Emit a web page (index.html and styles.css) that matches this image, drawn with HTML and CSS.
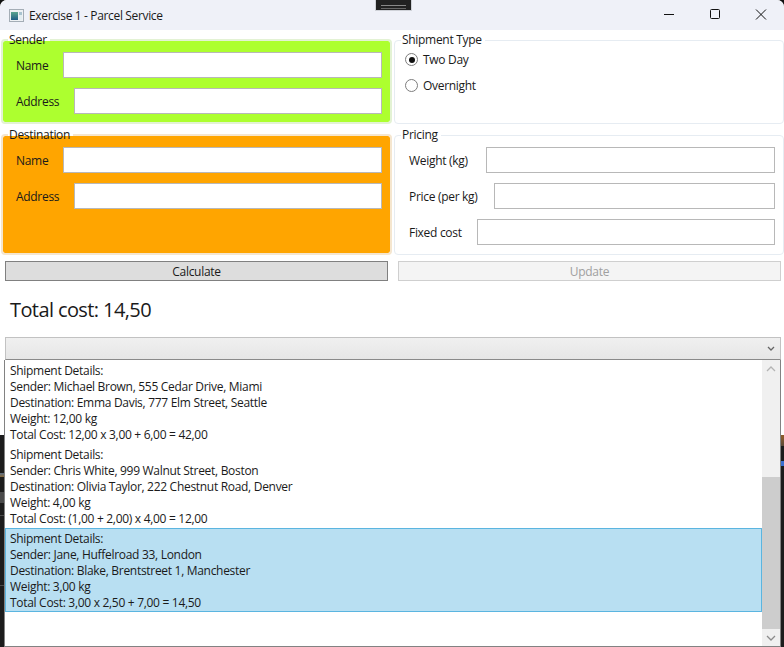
FILE: index.html
```html
<!DOCTYPE html>
<html lang="en">
<head>
<meta charset="UTF-8">
<meta name="viewport" content="width=device-width, initial-scale=1.0">
<title>Exercise 1 - Parcel Service</title>
<link rel="stylesheet" href="styles.css">
</head>
<body>
<div id="window">
  <div class="grip"><span></span></div>
  <header class="titlebar">
    <svg class="app-icon" width="15" height="13" viewBox="0 0 15 13">
      <defs>
        <linearGradient id="pane" x1="0" y1="0" x2="0" y2="1">
          <stop offset="0" stop-color="#5aa58f"/>
          <stop offset="1" stop-color="#1f5d86"/>
        </linearGradient>
      </defs>
      <rect x="0.5" y="0.5" width="14" height="12" fill="#eef1f4" stroke="#a4adb6"/>
      <rect x="2" y="3" width="7" height="8" fill="url(#pane)"/>
      <rect x="10" y="3" width="3" height="8" fill="#e3edf0"/>
      <rect x="10" y="3" width="3" height="3" fill="#a9c3cf"/>
    </svg>
    <span class="title">Exercise 1 - Parcel Service</span>
    <div class="caption">
      <svg width="46" height="30" viewBox="0 0 46 30"><path d="M18 14.5h10" stroke="#111" fill="none"/></svg>
      <svg width="46" height="30" viewBox="0 0 46 30"><rect x="18.5" y="9.5" width="9" height="9" rx="1" stroke="#111" fill="none"/></svg>
      <svg width="46" height="30" viewBox="0 0 46 30"><path d="M18 9.5l10 10M28 9.5l-10 10" stroke="#111" fill="none"/></svg>
    </div>
  </header>

  <main class="content">
    <div class="groups">
      <fieldset class="group sender">
        <legend>Sender</legend>
        <div class="body">
          <div class="field"><label>Name</label><input type="text"></div>
          <div class="field"><label>Address</label><input type="text"></div>
        </div>
      </fieldset>
      <fieldset class="group shipment">
        <legend>Shipment Type</legend>
        <div class="body">
          <div class="radio"><span class="dot checked"></span>Two Day</div>
          <div class="radio"><span class="dot"></span>Overnight</div>
        </div>
      </fieldset>
      <fieldset class="group destination">
        <legend>Destination</legend>
        <div class="body">
          <div class="field"><label>Name</label><input type="text"></div>
          <div class="field"><label>Address</label><input type="text"></div>
        </div>
      </fieldset>
      <fieldset class="group pricing">
        <legend>Pricing</legend>
        <div class="body">
          <div class="field weight"><label>Weight (kg)</label><input type="text"></div>
          <div class="field"><label>Price (per kg)</label><input type="text"></div>
          <div class="field fixed"><label>Fixed cost</label><input type="text"></div>
        </div>
      </fieldset>
    </div>

    <div class="buttons">
      <button class="btn">Calculate</button>
      <button class="btn" disabled>Update</button>
    </div>

    <div class="total">Total cost: 14,50</div>

    <div class="combo">
      <svg width="8" height="6" viewBox="0 0 8 6"><path d="M1 1l3 3 3-3" stroke="#666" stroke-width="1.3" fill="none"/></svg>
    </div>

    <div class="listbox">
      <ul class="items">
        <li>Shipment Details:<br>Sender: Michael Brown, 555 Cedar Drive, Miami<br>Destination: Emma Davis, 777 Elm Street, Seattle<br>Weight: 12,00 kg<br>Total Cost: 12,00 x 3,00 + 6,00 = 42,00</li>
        <li>Shipment Details:<br>Sender: Chris White, 999 Walnut Street, Boston<br>Destination: Olivia Taylor, 222 Chestnut Road, Denver<br>Weight: 4,00 kg<br>Total Cost: (1,00 + 2,00) x 4,00 = 12,00</li>
        <li class="selected">Shipment Details:<br>Sender: Jane, Huffelroad 33, London<br>Destination: Blake, Brentstreet 1, Manchester<br>Weight: 3,00 kg<br>Total Cost: 3,00 x 2,50 + 7,00 = 14,50</li>
      </ul>
      <div class="scrollbar">
        <svg width="10" height="6" viewBox="0 0 10 6"><path d="M1 5l4-4 4 4" stroke="#b4b4b4" stroke-width="1.3" fill="none"/></svg>
        <div class="track"><div class="thumb"></div></div>
        <svg width="10" height="6" viewBox="0 0 10 6"><path d="M1 1l4 4 4-4" stroke="#8c8c8c" stroke-width="1.3" fill="none"/></svg>
      </div>
    </div>
  </main>

  <!-- desktop showing past the window edges -->
  <div class="backdrop left"></div>
  <div class="backdrop right"></div>
</div>
</body>
</html>
```

FILE: styles.css
```css
html, body {
  margin: 0;
  padding: 0;
  height: 100%;
  overflow: hidden;
  background-color: #111;
}

#window {
  width: 784px;
  height: 647px;
  display: flex;
  flex-direction: column;
  position: relative;
  font-family: 'Open Sans', 'Noto Sans', sans-serif;
  font-size: 12px;
  color: #1a1a1a;
  background-color: white;
  border-radius: 7px 7px 0 0;
  overflow: hidden;
}

/* window title bar */
.titlebar {
  height: 30px;
  flex: none;
  display: flex;
  align-items: center;
  padding-left: 9px;
  background-color: #eff1f8;
}

.app-icon {
  margin-right: 5px;
}

.title {
  letter-spacing: -0.35px;
}

.caption {
  margin-left: auto;
  display: flex;
}

.grip {
  position: absolute;
  top: 0;
  left: 376px;
  width: 35px;
  height: 10px;
  background-color: #222;
  box-shadow: 0 0 0 1px #cfd2d8;
}

.grip span {
  display: block;
  margin: 5px 5px 0;
  height: 2px;
  border-top: 1px solid #888;
  border-bottom: 1px solid #666;
}

.content {
  flex: 1;
  display: flex;
  flex-direction: column;
  min-height: 0;
}

.groups {
  display: grid;
  grid-template-columns: 391px 390px;
  grid-template-rows: 92px 128px;
  column-gap: 2px;
  row-gap: 3px;
  padding: 2px 0 0 1px;
}

.group {
  margin: 0;
  padding: 0;
  border: 1px solid #e6ecf2;
  border-radius: 4px;
  min-width: 0;
  background-clip: padding-box;
}

.group legend {
  margin-left: 6px;
  padding: 0 3px 0 1px;
  line-height: 16px;
  letter-spacing: -0.3px;
}

.sender, .destination {
  border-width: 2px;
}

.sender legend, .destination legend {
  margin-left: 5px;
}

.sender {
  background-color: #adff2f;
  border-color: #e3f2d4;
}

.destination {
  background-color: orange;
  border-color: #f5e6cf;
}

.body {
  display: flex;
  flex-direction: column;
  gap: 10px;
  padding: 4px 8px 0 14px;
}

.sender .body, .destination .body {
  padding-left: 13px;
}

.shipment .body {
  gap: 0;
  padding: 0 0 0 10px;
  margin-top: -1px;
}

.field {
  display: flex;
  align-items: center;
}

.field label {
  margin-right: 15px;
  letter-spacing: -0.3px;
  white-space: nowrap;
}

.pricing .field label {
  margin-right: 16px;
}

.pricing .weight label {
  margin-right: 18px;
}

.pricing .fixed label {
  margin-right: 15px;
}

.field input {
  flex: 1;
  min-width: 0;
  height: 26px;
  box-sizing: border-box;
  border: 1px solid #b8b8b8;
  background-color: white;
  padding: 0;
  outline: none;
}

.radio {
  display: flex;
  align-items: center;
  height: 25.5px;
  letter-spacing: -0.3px;
}

.dot {
  width: 11px;
  height: 11px;
  margin-right: 5px;
  border: 1px solid #7d7d7d;
  border-radius: 50%;
  background-color: white;
  position: relative;
}

.dot.checked::after {
  content: '';
  position: absolute;
  top: 2.5px;
  left: 2.5px;
  width: 6px;
  height: 6px;
  border-radius: 50%;
  background-color: #111;
}

.buttons {
  display: flex;
  gap: 10px;
  margin: 6px 3px 0 5px;
}

.btn {
  flex: 1;
  height: 20px;
  padding: 0;
  font-family: inherit;
  font-size: 12px;
  letter-spacing: -0.3px;
  color: #1a1a1a;
  background-color: #dddddd;
  border: 1px solid #808080;
}

.btn:disabled {
  color: #a0a0a0;
  background-color: #f4f4f4;
  border-color: #cfcfcf;
}

.total {
  height: 56px;
  line-height: 58px;
  padding-left: 10px;
  font-size: 20px;
  letter-spacing: -0.6px;
}

.combo {
  height: 23px;
  flex: none;
  box-sizing: border-box;
  margin: 0 3px 0 5px;
  display: flex;
  align-items: center;
  justify-content: flex-end;
  padding-right: 5px;
  border: 1px solid #c2c2c2;
  border-bottom-color: #8a8a8a;
  background: linear-gradient(#f0f0f0, #e6e6e6);
}

.listbox {
  flex: 1;
  min-height: 0;
  display: flex;
  margin: 0 3px 0 4px;
  background-color: white;
  border-left: 1px solid #828282;
  border-right: 1px solid #828282;
  border-bottom: 1px solid #828282;
}

.items {
  flex: 1;
  list-style: none;
  margin: 0;
  padding: 0;
  letter-spacing: -0.3px;
  line-height: 16px;
}

.items li {
  padding: 2px 4px 1px;
  border: 1px solid transparent;
  height: 79px;
}

.items li.selected {
  background-color: #b8dff2;
  border-color: #5bb5e0;
}

.scrollbar {
  width: 18px;
  flex: none;
  display: flex;
  flex-direction: column;
  align-items: center;
  background-color: #f0f0f0;
  padding: 6px 0 5px;
  box-sizing: border-box;
}

.track {
  flex: 1;
  width: 100%;
  margin-bottom: 6px;
  display: flex;
  flex-direction: column;
  justify-content: flex-end;
}

.thumb {
  height: 152px;
  background-color: #cdcdcd;
}

.backdrop {
  position: absolute;
  top: 435px;
  bottom: 0;
  background-color: #1c1c1c;
}

.backdrop.left {
  left: 0;
  width: 4px;
  background-image: linear-gradient(transparent 38px, #5b6f86 38px, #8a6a3a 42px, transparent 42px, transparent 57px, #4a4a4a 57px, #4a4a4a 68px, transparent 68px, transparent 80px, #4a4a4a 80px, #4a4a4a 81px, transparent 81px, transparent 150px, #4a4a4a 150px, #4a4a4a 151px, transparent 151px);
}

.backdrop.right {
  left: 781px;
  width: 3px;
  background-image: linear-gradient(#8a5a2a 2px, #5a4a3a 11px, transparent 11px, transparent 26px, #3a6fd0 26px, #3a6fd0 31px, transparent 31px);
}
```
